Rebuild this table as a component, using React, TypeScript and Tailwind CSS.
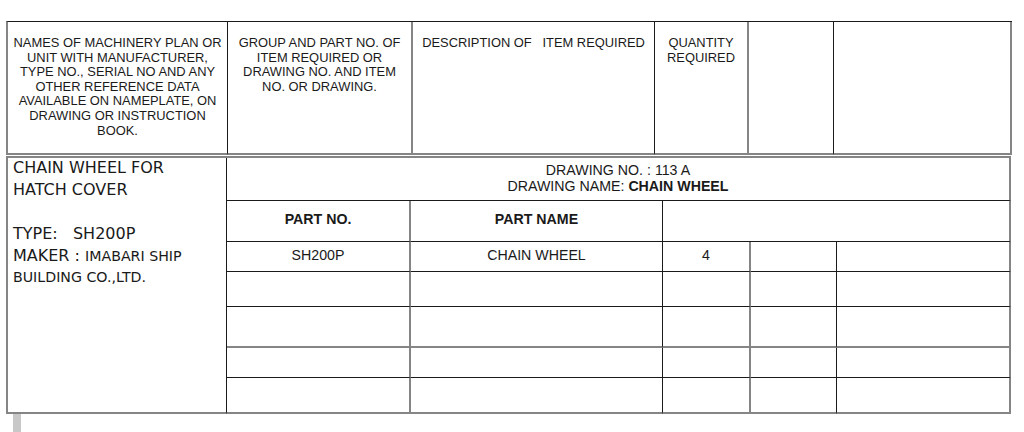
import React from "react";

const G = "border-[#858585]";
const B = "border-[#1a1a1a]";

export default function App() {
  const hdr =
    "h-[133px] pt-[14px] text-center text-[12.9px] leading-[14.6px] text-[#1a1a1a] uppercase";
  return (
    <div className="w-[1024px] h-[432px] bg-white overflow-hidden" style={{ fontFamily: '"Liberation Sans", Arial, sans-serif' }}>
      <div className="pt-[21px] pl-[6px]">
        {/* header table */}
        <div className={`grid grid-cols-[220px_185px_242px_94px_85px_178px] w-fit border-l-2 ${G} border-t border-t-[#1a1a1a]`}>
          <div className={`${hdr} border-r ${B} border-b-2 border-b-[#858585]`}>
            NAMES OF MACHINERY PLAN OR<br />UNIT WITH MANUFACTURER,<br />TYPE NO., SERIAL NO AND ANY<br />OTHER REFERENCE DATA<br />AVAILABLE ON NAMEPLATE, ON<br />DRAWING OR INSTRUCTION<br />BOOK.
          </div>
          <div className={`${hdr} border-r-2 ${G} border-b-2`}>
            GROUP AND PART NO. OF<br />ITEM REQUIRED OR<br />DRAWING NO. AND ITEM<br />NO. OR DRAWING.
          </div>
          <div className={`${hdr} whitespace-pre border-r ${B} border-b-2 border-b-[#858585]`}>
            {"DESCRIPTION OF   ITEM REQUIRED"}
          </div>
          <div className={`${hdr} border-r-2 ${G} border-b-2`}>
            QUANTITY<br />REQUIRED
          </div>
          <div className={`${hdr} border-r ${B} border-b-2 border-b-[#858585]`}></div>
          <div className={`${hdr} border-r-2 ${G} border-b-2`}></div>
        </div>

        {/* lower table */}
        <div
          className={`mt-[1px] grid grid-cols-[219px_184px_252px_88px_86px_174px] grid-rows-[43px_41px_30px_35px_41px_30px_36px] w-fit border-l-2 border-t-2 ${G} text-[14.2px] text-[#1a1a1a]`}
        >
          <div
            className={`row-span-7 border-r ${B} border-b-2 border-b-[#858585] pl-[5px] text-[#1a1a1a]`}
            style={{ fontFamily: '"DejaVu Sans", Tahoma, Verdana, sans-serif' }}
          >
            <div className="text-[16px] leading-[20px]">CHAIN WHEEL FOR</div>
            <div className="text-[16px] leading-[24px]">HATCH COVER</div>
            <div className="h-[22px]"></div>
            <div className="text-[16px] leading-[20px] whitespace-pre">{"TYPE:   SH200P"}</div>
            <div className="text-[16px] leading-[21px] whitespace-pre mt-[1px]">
              {"MAKER : "}
              <span className="text-[14.2px]">IMABARI SHIP</span>
            </div>
            <div className="text-[14.2px] leading-[20px]">BUILDING CO.,LTD.</div>
          </div>

          <div className={`col-span-5 border-r-2 ${G} border-b border-b-[#1a1a1a] pt-[4px] text-center leading-[16px]`}>
            <div>DRAWING NO. : 113 A</div>
            <div>
              DRAWING NAME: <span className="font-bold">CHAIN WHEEL</span>
            </div>
          </div>

          <div className={`border-r-2 ${G} border-b border-b-[#1a1a1a] pt-[10px] text-center leading-[16px] font-bold`}>PART NO.</div>
          <div className={`border-r ${B} border-b pt-[10px] text-center leading-[16px] font-bold`}>PART NAME</div>
          <div className={`col-span-3 border-r-2 ${G} border-b border-b-[#1a1a1a]`}></div>

          {[
            ["SH200P", "CHAIN WHEEL", "4"],
            ["", "", ""],
            ["", "", ""],
            ["", "", ""],
            ["", "", ""],
          ].map((r, i) => {
            const bb =
              i === 2 || i === 4
                ? "border-b-2 border-b-[#858585]"
                : "border-b border-b-[#1a1a1a]";
            return (
              <React.Fragment key={i}>
                <div className={`border-r-2 border-r-[#858585] ${bb} pt-[5px] text-center leading-[16px]`}>{r[0]}</div>
                <div className={`border-r border-r-[#1a1a1a] ${bb} pt-[5px] text-center leading-[16px]`}>{r[1]}</div>
                <div className={`border-r-2 border-r-[#858585] ${bb} pt-[5px] text-center leading-[16px]`}>{r[2]}</div>
                <div className={`border-r border-r-[#1a1a1a] ${bb}`}></div>
                <div className={`border-r-2 border-r-[#858585] ${bb}`}></div>
              </React.Fragment>
            );
          })}
        </div>
        <div className="ml-[7px] w-[8px] h-[20px] bg-[#c8c8c8]"></div>
      </div>
    </div>
  );
}
